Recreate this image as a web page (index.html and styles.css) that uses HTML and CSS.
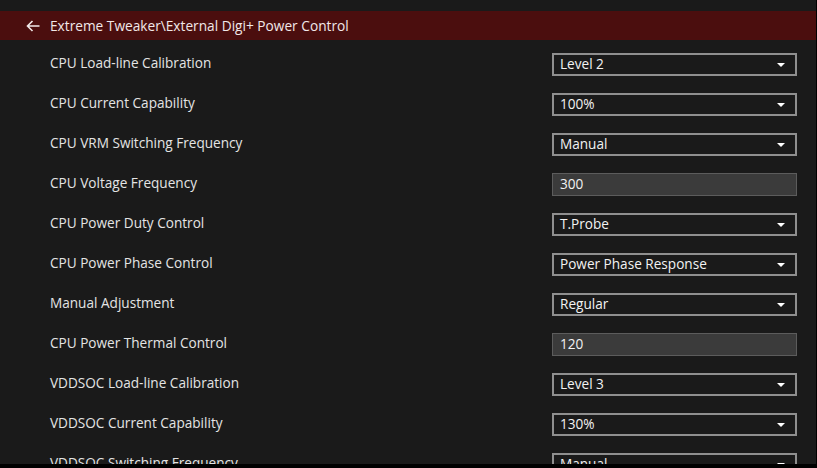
FILE: index.html
```html
<!DOCTYPE html>
<html lang="en">
<head>
<meta charset="utf-8">
<title>External Digi+ Power Control</title>
<link rel="stylesheet" href="styles.css">
</head>
<body>
<div class="screen">
  <div class="header">
    <svg class="back" width="14" height="12" viewBox="0 0 14 12"><path d="M13.5 6H1.5M6.5 1L1.5 6l5 5" fill="none" stroke="#f2eaea" stroke-width="1.6"/></svg>
    <span class="title">Extreme Tweaker\External Digi+ Power Control</span>
  </div>
  <div class="list">
    <div class="row"><span class="label">CPU Load-line Calibration</span><div class="select">Level 2<span class="caret"></span></div></div>
    <div class="row"><span class="label">CPU Current Capability</span><div class="select">100%<span class="caret"></span></div></div>
    <div class="row"><span class="label">CPU VRM Switching Frequency</span><div class="select">Manual<span class="caret"></span></div></div>
    <div class="row"><span class="label">CPU Voltage Frequency</span><div class="input">300</div></div>
    <div class="row"><span class="label">CPU Power Duty Control</span><div class="select">T.Probe<span class="caret"></span></div></div>
    <div class="row"><span class="label">CPU Power Phase Control</span><div class="select">Power Phase Response<span class="caret"></span></div></div>
    <div class="row"><span class="label">Manual Adjustment</span><div class="select">Regular<span class="caret"></span></div></div>
    <div class="row"><span class="label">CPU Power Thermal Control</span><div class="input">120</div></div>
    <div class="row"><span class="label">VDDSOC Load-line Calibration</span><div class="select">Level 3<span class="caret"></span></div></div>
    <div class="row"><span class="label">VDDSOC Current Capability</span><div class="select">130%<span class="caret"></span></div></div>
    <div class="row"><span class="label">VDDSOC Switching Frequency</span><div class="select">Manual<span class="caret"></span></div></div>
  </div>
</div>
</body>
</html>
```
FILE: styles.css
```css
html, body {
  margin: 0;
  padding: 0;
  background: #000;
}
body {
  font-family: "Open Sans", "Noto Sans", sans-serif;
  color: #e4e4e4;
}
.screen {
  width: 816px;
  height: 464px;
  background: #1a1a1a;
  overflow: hidden;
  padding-top: 11px;
  box-sizing: border-box;
}
.header {
  height: 29px;
  background: #4b0e0e;
  display: flex;
  align-items: center;
  padding-left: 26px;
  gap: 10px;
}
.back {
  display: block;
}
.title {
  font-size: 13.7px;
  color: #f1e8e8;
}
.list {
  margin-top: 4px;
  padding-left: 50px;
  padding-right: 19px;
}
.row {
  height: 40px;
  display: flex;
  align-items: center;
  justify-content: space-between;
}
.label {
  font-size: 13.6px;
  margin-top: -4px;
}
.select, .input {
  width: 245px;
  height: 23px;
  box-sizing: border-box;
  display: flex;
  align-items: center;
  padding-left: 6px;
  padding-bottom: 2px;
  font-size: 13.6px;
  color: #f2f2f2;
  position: relative;
}
.select {
  border: 2px solid #8f8f8f;
  background: #1a1a1a;
}
.input {
  border: 1px solid #5c5c5c;
  background: #3b3b3b;
  padding-left: 7px;
}
.caret {
  position: absolute;
  right: 10px;
  top: 8px;
  width: 0;
  height: 0;
  border-left: 4.5px solid transparent;
  border-right: 4.5px solid transparent;
  border-top: 4px solid #ffffff;
}
```
